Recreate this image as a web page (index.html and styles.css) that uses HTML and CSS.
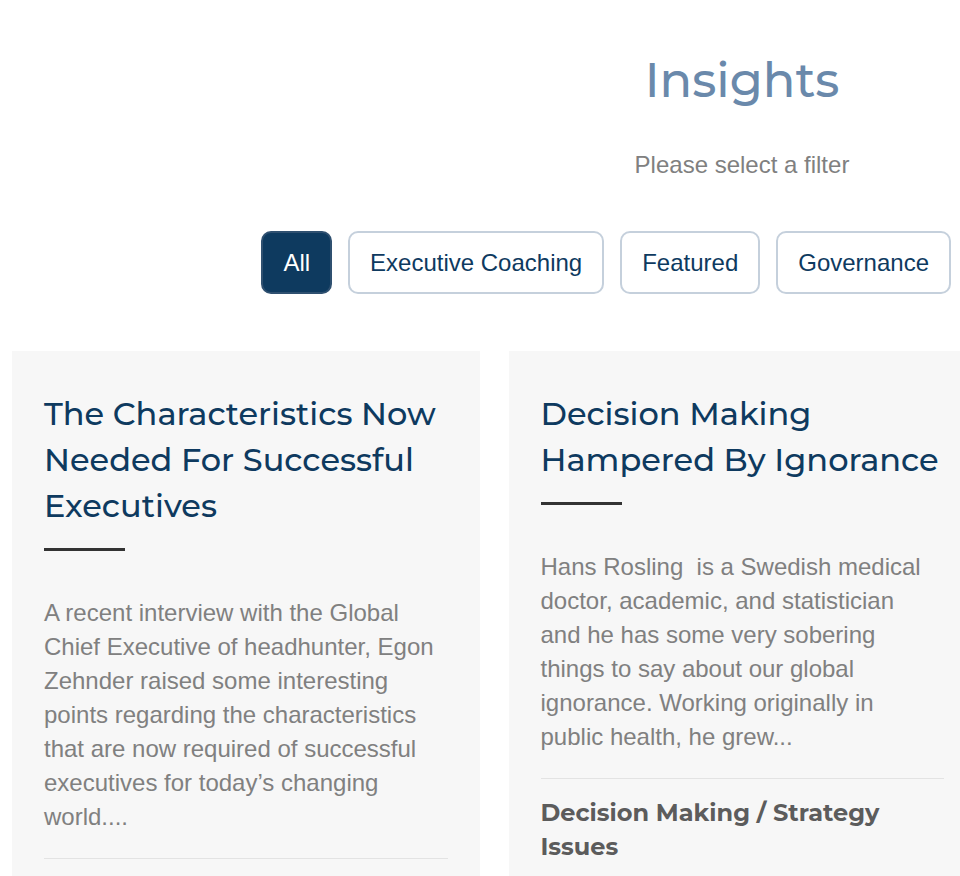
FILE: index.html
```html
<!DOCTYPE html>
<html lang="en">
<head>
    <meta charset="utf-8">
    <meta name="viewport" content="width=device-width, initial-scale=1">
    <title>Insights</title>
    <link rel="stylesheet" href="styles.css">
</head>
<body>
    <header class="intro">
        <h1>Insights</h1>
        <p>Please select a filter</p>
    </header>

    <div class="filters" role="group" aria-label="Filter">
        <button type="button" class="filter active" aria-pressed="true">All</button>
        <button type="button" class="filter" aria-pressed="false">Executive Coaching</button>
        <button type="button" class="filter" aria-pressed="false">Featured</button>
        <button type="button" class="filter" aria-pressed="false">Governance</button>
    </div>

    <main class="cards">
        <article class="card">
            <h2><a href="#">The Characteristics Now Needed For Successful Executives</a></h2>
            <p class="excerpt">A recent interview with the Global Chief Executive of headhunter, Egon Zehnder raised some interesting points regarding the characteristics that are now required of successful executives for today’s changing world....</p>
            <footer></footer>
        </article>
        <article class="card">
            <h2><a href="#">Decision Making Hampered By Ignorance</a></h2>
            <p class="excerpt">Hans Rosling&nbsp; is a Swedish medical doctor, academic, and statistician and he has some very sobering things to say about our global ignorance. Working originally in public health, he grew...</p>
            <footer>Decision Making / Strategy Issues</footer>
        </article>
    </main>
</body>
</html>
```

FILE: styles.css
```css
* {
    box-sizing: border-box;
}
body {
    margin: 0;
    background-color: #fff;
    color: #808080;
    font-family: "Helvetica Neue", "Liberation Sans", Arial, sans-serif;
    font-size: 24px;
    line-height: 34px;
    overflow-x: hidden;
}
h1, h2, p {
    margin: 0;
}
h1, h2, .card footer {
    font-family: Montserrat, Inter, sans-serif;
}
.intro {
    padding: 50px 0 0 524px;
    text-align: center;
}
h1 {
    margin-bottom: 38px;
    color: #6a89ab;
    font-size: 48px;
    font-weight: 500;
    line-height: 60px;
}
.filters {
    display: flex;
    justify-content: flex-end;
    gap: 16px;
    padding: 49px 9px 57px;
}
.filter {
    padding: 12px 20px;
    border: 2px solid #c5d0dc;
    border-radius: 10px;
    background-color: #fff;
    color: #0e3a5f;
    font: inherit;
    line-height: 35px;
    white-space: nowrap;
    cursor: pointer;
}
.filter.active {
    border-color: #2f5070;
    background-color: #0e3a5f;
    color: #fff;
}
.cards {
    display: grid;
    grid-template-columns: 1fr 1fr;
    gap: 29px;
    margin: 0 -16px 0 12px;
}
.card {
    padding: 40px 32px;
    background-color: #f7f7f7;
}
h2 {
    font-size: 32px;
    font-weight: 500;
    line-height: 46px;
}
h2 a {
    color: #0e3a5f;
    text-decoration: none;
}
h2::after {
    content: "";
    display: block;
    width: 81px;
    height: 3px;
    margin: 19px 0 45px;
    background-color: #333;
}
.excerpt {
    padding-right: 8px;
}
.card footer {
    margin-top: 24px;
    padding-top: 17px;
    border-top: 1px solid #e3e3e3;
    color: #5c5c5c;
    font-size: 24px;
    font-weight: 700;
}
```
